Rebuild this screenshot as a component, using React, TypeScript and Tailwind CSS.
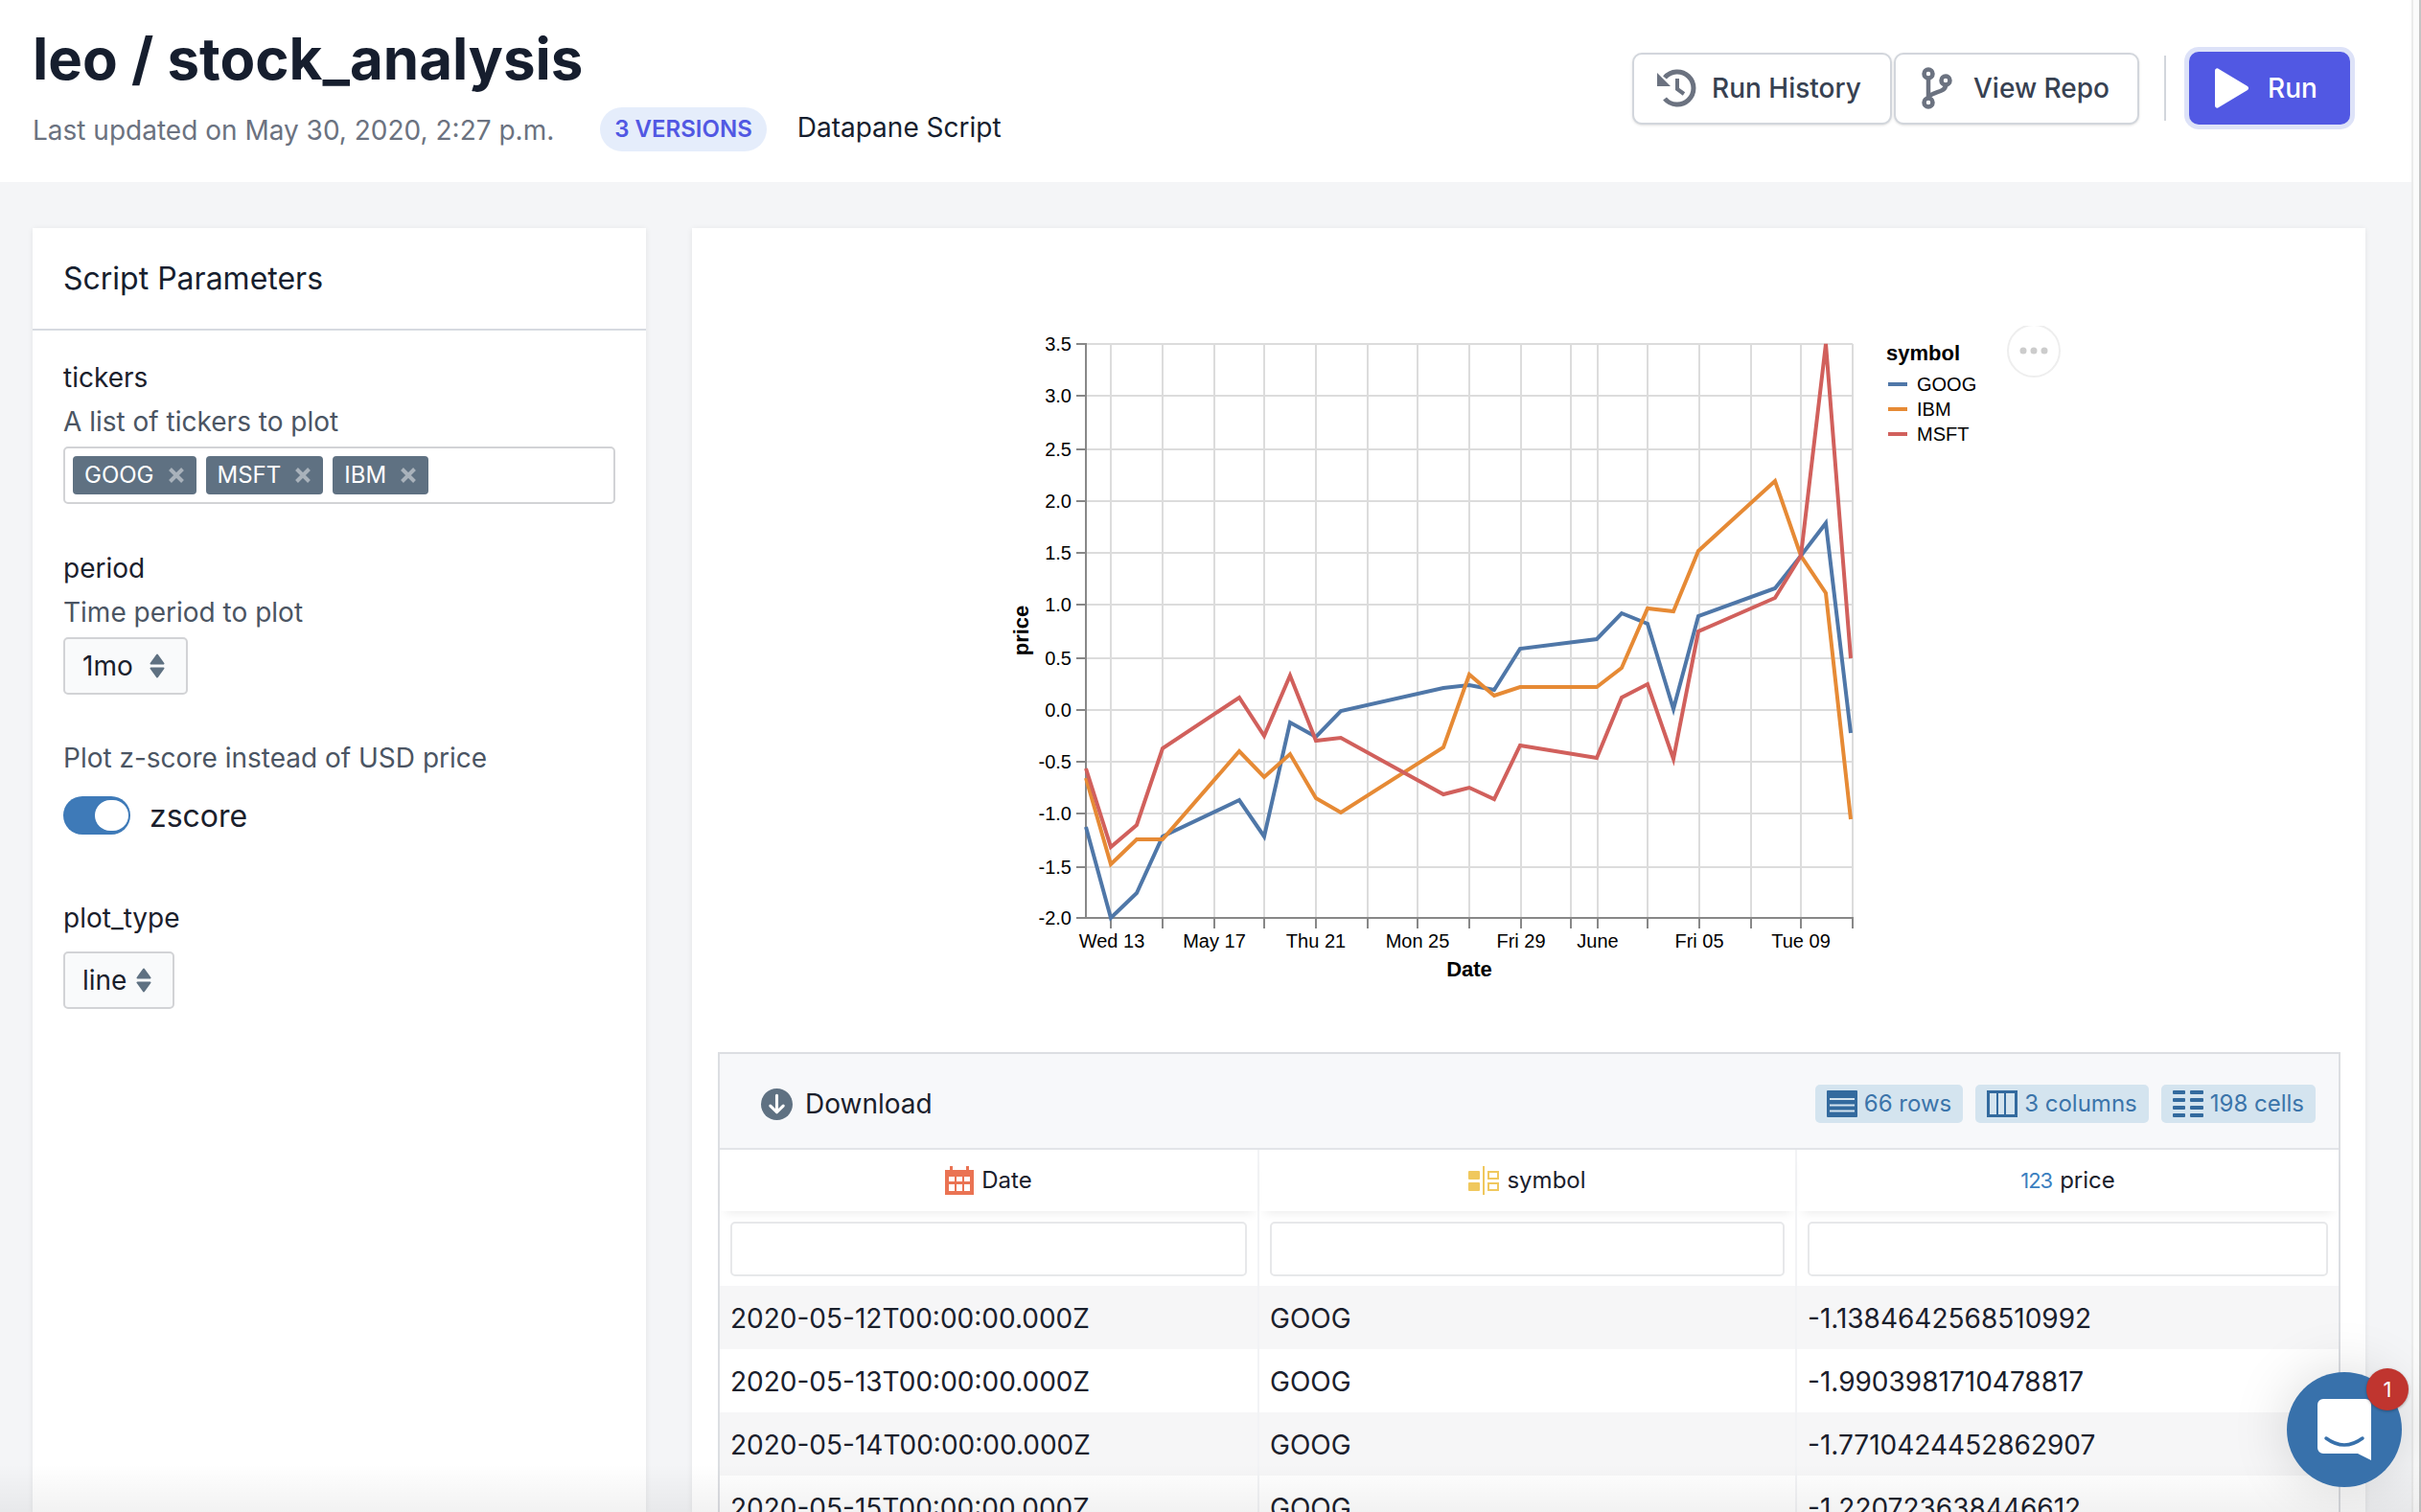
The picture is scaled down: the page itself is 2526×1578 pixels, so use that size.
import React from 'react';

const fontSans = { fontFamily: 'Inter, "Noto Sans", sans-serif' };

const xs = [1133, 1159, 1186, 1213, 1293, 1319, 1346, 1373, 1399, 1506, 1533, 1559, 1586, 1666, 1692, 1719, 1746, 1772, 1852, 1879, 1905, 1931];

const series = [
  { name: 'GOOG', color: '#4f77a8', ys: [863, 958, 932, 873, 835, 873, 754, 769, 742, 718, 715, 720, 677, 667, 640, 651, 740, 643, 614, 580, 546, 765] },
  { name: 'IBM', color: '#e68a35', ys: [812, 902, 876, 876, 784, 811, 787, 833, 848, 780, 704, 726, 717, 717, 697, 635, 638, 575, 502, 580, 619, 855] },
  { name: 'MSFT', color: '#d1605c', ys: [802, 884, 861, 781, 728, 768, 705, 773, 770, 829, 822, 834, 778, 791, 728, 714, 792, 659, 624, 580, 359, 687] },
];

const yTicks: [string, number][] = [
  ['3.5', 359], ['3.0', 413], ['2.5', 469], ['2.0', 523], ['1.5', 577], ['1.0', 631],
  ['0.5', 687], ['0.0', 741], ['-0.5', 795], ['-1.0', 849], ['-1.5', 905], ['-2.0', 958],
];
const xTicks = [1159, 1213, 1267, 1319, 1373, 1427, 1479, 1533, 1587, 1639, 1667, 1719, 1773, 1827, 1879, 1933];
const xLabels: [string, number][] = [
  ['Wed 13', 1160], ['May 17', 1267], ['Thu 21', 1373], ['Mon 25', 1479],
  ['Fri 29', 1587], ['June', 1667], ['Fri 05', 1773], ['Tue 09', 1879],
];

const rows = [
  ['2020-05-12T00:00:00.000Z', 'GOOG', '-1.1384642568510992'],
  ['2020-05-13T00:00:00.000Z', 'GOOG', '-1.9903981710478817'],
  ['2020-05-14T00:00:00.000Z', 'GOOG', '-1.7710424452862907'],
  ['2020-05-15T00:00:00.000Z', 'GOOG', '-1.220723638446612'],
];

const Chart = () => (
  <svg width="1130" height="700" viewBox="1030 340 1130 700" className="block" style={{ fontFamily: '"Liberation Sans", Arial, sans-serif' }}>
    {yTicks.map(([, y]) => (
      <line key={y} x1="1133" x2="1933" y1={y} y2={y} stroke="#dcdcdc" strokeWidth="2" />
    ))}
    {xTicks.map((x) => (
      <line key={x} x1={x} x2={x} y1="359" y2="958" stroke="#dcdcdc" strokeWidth="2" />
    ))}
    <line x1="1133" x2="1133" y1="358" y2="959" stroke="#888" strokeWidth="2" />
    <line x1="1123" x2="1934" y1="958" y2="958" stroke="#888" strokeWidth="2" />
    {yTicks.map(([label, y]) => (
      <g key={label}>
        <line x1="1123" x2="1133" y1={y} y2={y} stroke="#888" strokeWidth="2" />
        <text x="1118" y={y + 7} textAnchor="end" fontSize="20" fill="#000">{label}</text>
      </g>
    ))}
    {xTicks.map((x) => (
      <line key={x} x1={x} x2={x} y1="958" y2="969" stroke="#888" strokeWidth="2" />
    ))}
    {xLabels.map(([label, x]) => (
      <text key={label} x={x} y="989" textAnchor="middle" fontSize="20" fill="#000">{label}</text>
    ))}
    <text x="1533" y="1019" textAnchor="middle" fontSize="22" fontWeight="700" fill="#000">Date</text>
    <text transform="translate(1073 658) rotate(-90)" textAnchor="middle" fontSize="22" fontWeight="700" fill="#000">price</text>
    {series.map((s) => (
      <polyline
        key={s.name}
        fill="none"
        stroke={s.color}
        strokeWidth="4"
        points={s.ys.map((y, i) => `${xs[i]},${y}`).join(' ')}
      />
    ))}
    <text x="1968" y="376" fontSize="22" fontWeight="700" fill="#000">symbol</text>
    {series.map((s, i) => (
      <g key={s.name}>
        <line x1="1970" x2="1990" y1={401 + i * 26} y2={401 + i * 26} stroke={s.color} strokeWidth="4" />
        <text x="2000" y={408 + i * 26} fontSize="20" fill="#000">{s.name}</text>
      </g>
    ))}
    <circle cx="2122" cy="366" r="27" fill="#fff" stroke="#eee" strokeWidth="2" />
    <circle cx="2111" cy="366" r="3.5" fill="#ccc" />
    <circle cx="2122" cy="366" r="3.5" fill="#ccc" />
    <circle cx="2133" cy="366" r="3.5" fill="#ccc" />
  </svg>
);

const Tag = ({ label }: { label: string }) => (
  <span className="flex items-center h-10 px-3 gap-[14px] rounded-[4px] bg-[#5f7182] text-white text-[24px]">
    {label}
    <svg width="18" height="18" viewBox="0 0 18 18" stroke="#a9b2bb" strokeWidth="4">
      <path d="M2.500 2.500l13 13M15.500 2.500l-13 13" />
    </svg>
  </span>
);

const Select = ({ label, className }: { label: string; className: string }) => (
  <div className={`flex items-center justify-between h-[60px] pl-[18px] pr-[21px] bg-[#f9fafb] border-2 border-[#d2d3d6] rounded-[5px] text-[28px] text-[#1a202c] ${className}`}>
    {label}
    <svg width="18" height="26" viewBox="0 0 18 26" fill="#5f7182" stroke="#5f7182" strokeWidth="2" strokeLinejoin="round">
      <path d="M9 1.500l6.500 9h-13zM9 24.500L2.500 15.500h13z" />
    </svg>
  </div>
);

const Stat = ({ icon, label }: { icon: React.ReactNode; label: string }) => (
  <span className="flex items-center gap-[7px] h-10 px-3 rounded-[5px] bg-[#d4e4ef] text-[#3b74aa] text-[24px]">
    {icon}
    {label}
  </span>
);

export default function App() {
  return (
    <div style={fontSans} className="flex w-[2526px] h-[1578px] overflow-hidden bg-[#f4f5f7] relative">
      <div className="flex-1 min-w-0 flex flex-col">
        <header className="h-[190px] shrink-0 bg-white flex items-start justify-between pl-[34px] pr-[64px]">
          <div>
            <h1 className="mt-[25px] text-[60px] leading-[72px] font-bold text-[#161e2e]">leo / stock_analysis</h1>
            <div className="mt-[15px] flex items-center">
              <span className="mt-[1px] text-[28px] text-[#6b7280]">Last updated on May 30, 2020, 2:27 p.m.</span>
              <span className="ml-[48px] h-[46px] px-[15px] flex items-center rounded-full bg-[#e5edfb] text-[#5158e3] text-[24px] font-semibold">3 VERSIONS</span>
              <span className="ml-[32px] -mt-[5px] text-[28px] text-[#161e2e]">Datapane Script</span>
            </div>
          </div>
          <div className="mt-[54px] flex items-center">
            <button className="flex items-center h-[75px] w-[271px] pl-[24px] gap-[16px] bg-white border-2 border-[#d2d6dc] rounded-[10px] shadow-sm text-[28px] font-medium text-[#374151]">
              <svg width="41" height="40" viewBox="0 0 41 40" fill="none" stroke="#6b7280" strokeWidth="5">
                <path d="M8 9A17 17 0 1 1 8 31" />
                <path d="M0 4v14h14z" fill="#6b7280" stroke="none" />
                <path d="M21 10v11l7 5" strokeWidth="4" />
              </svg>
              Run History
            </button>
            <button className="ml-[2px] flex items-center h-[75px] w-[256px] pl-[26px] gap-[21px] bg-white border-2 border-[#d2d6dc] rounded-[10px] shadow-sm text-[28px] font-medium text-[#374151]">
              <svg width="34" height="44" viewBox="0 0 34 44" fill="none" stroke="#6b7280" strokeWidth="4.500">
                <circle cx="8" cy="7" r="4.500" />
                <circle cx="8" cy="37" r="4.500" />
                <circle cx="26" cy="14" r="4.500" />
                <path d="M8 12v20M26 19c0 8-14 6-18 13" />
              </svg>
              View Repo
            </button>
            <div className="ml-[26px] w-[2px] h-[68px] bg-[#d2d6dc]" />
            <button className="ml-[24px] flex items-center h-[76px] w-[168px] pl-[27px] gap-[19px] bg-[#5158e3] rounded-[10px] ring-[5px] ring-[#dde2f8] text-[28px] font-medium text-white">
              <svg width="36" height="42" viewBox="0 0 36 42" fill="#fff">
                <path d="M0 3c0-2.500 2.500-3.500 4-2l30 18c1.500 1 1.500 3 0 4L4 41c-1.500 1.500-4 .5-4-2z" />
              </svg>
              Run
            </button>
          </div>
        </header>

        <main className="flex-1 min-h-0 flex items-start pt-[48px] pl-[34px] pr-[49px] gap-[48px]">
          <aside className="w-[640px] h-[1340px] shrink-0 bg-white shadow-[0_1px_6px_rgba(0,0,0,0.08)]">
            <div className="h-[107px] border-b-2 border-[#d6dae0] flex items-center px-[32px] text-[32px] text-[#161e2e]">Script Parameters</div>
            <div className="px-[32px] pt-[29px] flex flex-col">
              <div className="text-[28px] leading-[40px] text-[#1a202c]">tickers</div>
              <div className="mt-[6px] text-[28px] leading-[40px] text-[#4b5563]">A list of tickers to plot</div>
              <div className="mt-[6px] h-[60px] w-[576px] border-2 border-[#d2d3d6] rounded-[5px] flex items-center gap-[10px] pl-2">
                <Tag label="GOOG" />
                <Tag label="MSFT" />
                <Tag label="IBM" />
              </div>
              <div className="mt-[47px] text-[28px] leading-[40px] text-[#1a202c]">period</div>
              <div className="mt-[6px] text-[28px] leading-[40px] text-[#4b5563]">Time period to plot</div>
              <Select label="1mo" className="mt-[6px] w-[130px]" />
              <div className="mt-[46px] text-[28px] leading-[40px] text-[#4b5563]">Plot z-score instead of USD price</div>
              <div className="mt-[15px] flex items-center gap-[20px]">
                <div className="w-[70px] h-10 rounded-full bg-[#3e7ab8] flex items-center justify-end pr-[2px]">
                  <div className="w-[35px] h-[32px] rounded-full bg-white" />
                </div>
                <span className="mt-[2px] text-[32px] text-[#1a202c]">zscore</span>
              </div>
              <div className="mt-[62px] text-[28px] leading-[40px] text-[#1a202c]">plot_type</div>
              <Select label="line" className="mt-[15px] w-[116px]" />
            </div>
          </aside>

          <section className="w-[1746px] h-[1340px] shrink-0 bg-white shadow-[0_1px_6px_rgba(0,0,0,0.08)] pt-[102px] px-[27px]">
            <div className="flex justify-start pl-[281px] h-[758px]">
              <Chart />
            </div>
            <div className="border-2 border-[#dcdee2] w-[1693px]">
              <div className="h-[100px] pt-[6px] bg-[#f7f8fa] border-b-2 border-[#e2e4e8] flex items-center justify-between pl-[43px] pr-[24px]">
                <div className="flex items-center gap-[13px] text-[28px] text-[#1a202c]">
                  <svg width="33" height="33" viewBox="0 0 32 32">
                    <circle cx="16" cy="16" r="16" fill="#5f7182" />
                    <path d="M16 7v17M9.500 17.500L16 24l6.500-6.500" fill="none" stroke="#fff" strokeWidth="3" strokeLinecap="round" strokeLinejoin="round" />
                  </svg>
                  Download
                </div>
                <div className="flex items-center gap-[13px]">
                  <Stat
                    label="66 rows"
                    icon={
                      <svg width="32" height="28" viewBox="0 0 32 28">
                        <rect width="32" height="28" rx="1" fill="#336a9e" />
                        <path d="M3 9h26M3 15.500h26M3 21.500h26" stroke="#d4e4ef" strokeWidth="2" />
                      </svg>
                    }
                  />
                  <Stat
                    label="3 columns"
                    icon={
                      <svg width="32" height="28" viewBox="0 0 32 28">
                        <rect x="1.500" y="1.500" width="29" height="25" fill="none" stroke="#336a9e" strokeWidth="3" />
                        <path d="M11 2v24M19 2v24" stroke="#336a9e" strokeWidth="2" />
                      </svg>
                    }
                  />
                  <Stat
                    label="198 cells"
                    icon={
                      <svg width="32" height="28" viewBox="0 0 32 28" fill="#336a9e">
                        <rect width="13" height="4" rx="1" />
                        <rect x="18" width="14" height="4" rx="1" />
                        <rect y="8" width="13" height="4" rx="1" />
                        <rect x="18" y="8" width="14" height="4" rx="1" />
                        <rect y="16" width="13" height="4" rx="1" />
                        <rect x="18" y="16" width="14" height="4" rx="1" />
                        <rect y="24" width="13" height="4" rx="1" />
                        <rect x="18" y="24" width="14" height="4" rx="1" />
                      </svg>
                    }
                  />
                </div>
              </div>
              <div className="grid grid-cols-[563px_561px_1fr] text-[#1a202c]">
                <div className="h-[64px] flex items-center justify-center gap-[8px] text-[24px] border-r-2 border-[#f2f3f5] shadow-[0_8px_10px_-6px_rgba(0,0,0,0.08)]">
                  <svg width="30" height="30" viewBox="0 0 30 30" fill="#ea7353">
                    <path d="M0 4h5V0h3v4h14V0h3v4h5v26H0z" />
                    <path d="M4 11h6v5H4zM12 11h6v5h-6zM20 11h6v5h-6zM4 19h6v7H4zM12 19h6v7h-6zM20 19h6v7h-6z" fill="#fff" />
                  </svg>
                  Date
                </div>
                <div className="h-[64px] flex items-center justify-center gap-[8px] text-[24px] border-r-2 border-[#f2f3f5] shadow-[0_8px_10px_-6px_rgba(0,0,0,0.08)]">
                  <svg width="32" height="32" viewBox="0 0 32 32" fill="#f0c85e">
                    <rect y="6" width="12" height="9" rx="1" />
                    <rect y="18" width="12" height="9" rx="1" />
                    <rect x="15" y="1" width="2" height="30" />
                    <rect x="21" y="7" width="10" height="7" fill="none" stroke="#f0c85e" strokeWidth="2" />
                    <rect x="21" y="19" width="10" height="7" fill="none" stroke="#f0c85e" strokeWidth="2" />
                  </svg>
                  symbol
                </div>
                <div className="h-[64px] flex items-center justify-center gap-[8px] text-[24px] shadow-[0_8px_10px_-6px_rgba(0,0,0,0.08)]">
                  <span className="text-[#3b7fc0] text-[22px] tracking-[-1px]">123</span>
                  price
                </div>
                {[0, 1, 2].map((i) => (
                  <div key={i} className={`h-[78px] px-[11px] pt-[11px] ${i < 2 ? 'border-r-2 border-[#f2f3f5]' : ''}`}>
                    <div className="h-[57px] bg-white border-2 border-[#e7e8ea] rounded-[5px]" />
                  </div>
                ))}
                {rows.map((row, r) =>
                  row.map((cell, c) => (
                    <div
                      key={`${r}-${c}`}
                      className={`h-[66px] px-[11px] pt-[2px] flex items-center text-[28px] ${r % 2 === 0 ? 'bg-[#f6f6f7]' : 'bg-white'} ${c < 2 ? 'border-r-2 border-[#f2f3f5]' : ''}`}
                    >
                      {cell}
                    </div>
                  )),
                )}
              </div>
            </div>
          </section>
        </main>
      </div>
      <div className="w-[10px] shrink-0 bg-[#fbfbfb] border-l-2 border-l-[#ebebeb] border-r-2 border-r-[#c4c4c4]" />

      <div className="absolute inset-x-0 bottom-0 h-[50px] bg-gradient-to-b from-transparent to-[rgba(0,0,0,0.05)] pointer-events-none" />

      <div className="absolute left-[2386px] top-[1432px] w-[120px] h-[120px] rounded-full bg-[#3871ab] shadow-[0_0_60px_rgba(0,0,0,0.15)] flex items-center justify-center">
        <svg width="56" height="64" viewBox="0 0 56 64">
          <path d="M6 0h44a6 6 0 0 1 6 6v58l-14-7H6a6 6 0 0 1-6-6V6a6 6 0 0 1 6-6z" fill="#fff" />
          <path d="M9 41Q28 55 47 41" fill="none" stroke="#3871ab" strokeWidth="3.500" strokeLinecap="round" />
        </svg>
      </div>
      <div className="absolute left-[2469px] top-[1428px] w-[44px] h-[44px] rounded-full bg-[#c0352f] text-white text-[22px] flex items-center justify-center shadow-[0_1px_3px_rgba(0,0,0,0.3)]">1</div>
    </div>
  );
}
